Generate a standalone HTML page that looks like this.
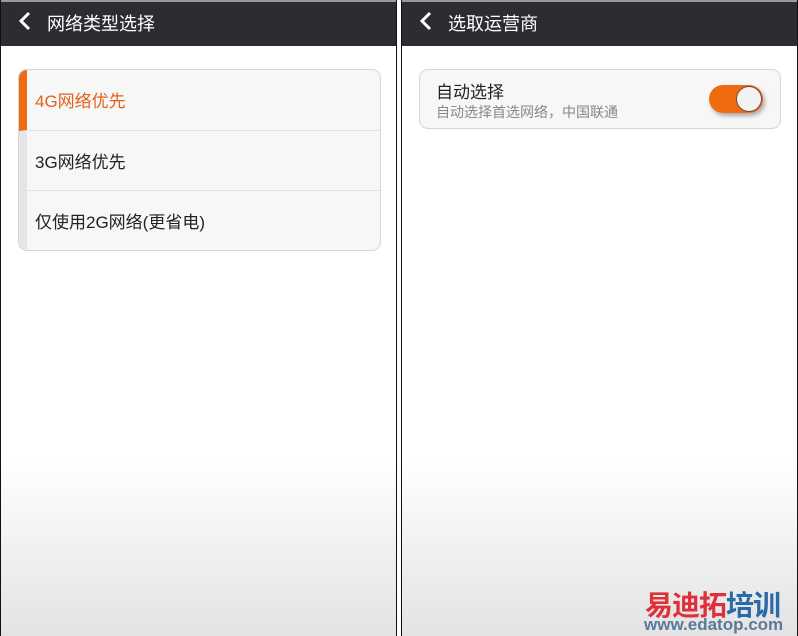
<!DOCTYPE html>
<html><head><meta charset="utf-8"><style>
*{margin:0;padding:0;box-sizing:border-box}
body{width:798px;height:636px;overflow:hidden;background:#fff;font-family:"Liberation Sans","Noto Sans CJK SC",sans-serif;position:relative}
.p{position:absolute;top:0;height:636px;background:linear-gradient(#fff 0,#fff 460px,#e3e3e5 636px);border-left:1px solid #111;border-right:1px solid #111}
.h{position:absolute;left:0;right:0;top:0;height:46px;background:#2c2d31;border-top:2px solid #9a9a9a}
.h span{position:absolute;left:46px;top:8px;color:#fff;font-size:18px}
.h svg{position:absolute;left:17px;top:9px}
.card{position:absolute;background:#f7f7f7;border:1px solid #d6d6d6;border-radius:9px;overflow:hidden}
.row{position:relative;height:60.5px;border-bottom:1px solid #e2e2e2;font-size:17px;color:#222;padding:17px 0 0 8px;border-left:8px solid #e6e6e6}
.row:last-child{border-bottom:none}
</style></head><body>
<div class="p" style="left:0;width:397px">
 <div class="h"><svg width="14" height="20" viewBox="0 0 14 20"><path d="M11 2L3 10l8 8" stroke="#fff" stroke-width="3" fill="none"/></svg><span>网络类型选择</span></div>
 <div class="card" style="left:17px;top:69px;width:363px;height:182px">
  <div class="row" style="border-left-color:#f06a12;color:#e0621a">4G网络优先</div>
  <div class="row">3G网络优先</div>
  <div class="row">仅使用2G网络(更省电)</div>
 </div>
</div>
<div class="p" style="left:401px;width:397px">
 <div class="h"><svg width="14" height="20" viewBox="0 0 14 20"><path d="M11 2L3 10l8 8" stroke="#fff" stroke-width="3" fill="none"/></svg><span>选取运营商</span></div>
 <div class="card" style="left:17px;top:69px;width:362px;height:60px">
  <div style="position:absolute;left:16px;top:8px;font-size:17px;color:#222">自动选择</div>
  <div style="position:absolute;left:16px;top:32px;font-size:14px;color:#888">自动选择首选网络，中国联通</div>
  <div style="position:absolute;left:289px;top:15px;width:54px;height:28px;border-radius:14px;background:#f06a12;box-shadow:2px 3px 4px rgba(0,0,0,.3)"><div style="position:absolute;right:1px;top:1px;width:26px;height:26px;border-radius:13px;background:#f2f2f2;border:1px solid #7a4a30"></div></div>
 </div>
</div>
<div style="position:absolute;left:645px;top:584px;font-size:28px;font-weight:bold;letter-spacing:-1px"><span style="color:#e0303a">易迪拓</span><span style="color:#2a6aa8">培训</span></div>
<div style="position:absolute;left:644px;top:615px;font-size:17px;font-weight:bold;color:#5a7a98">www.edatop.com</div>
</body></html>
